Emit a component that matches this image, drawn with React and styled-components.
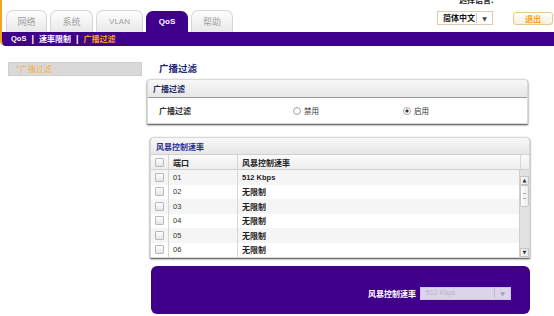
import React from 'react';
import styled, { createGlobalStyle } from 'styled-components';

const PURPLE = '#3f008b';
const ORANGE = '#f7a21b';
const CJK = `"Noto Sans CJK SC", "Liberation Sans", sans-serif`;
const LAT = `"Liberation Sans", "Noto Sans CJK SC", sans-serif`;

const Global = createGlobalStyle`
  html, body { margin: 0; padding: 0; background: #fff; overflow: hidden; }
  body { font-family: ${LAT}; }
  * { box-sizing: border-box; }
`;

const Page = styled.div`
  width: 554px;
  height: 316px;
  overflow: hidden;
`;

const TopFrame = styled.div`
  border-left: 2px solid ${ORANGE};
  border-bottom-left-radius: 5px;
  overflow: hidden;
`;

const Header = styled.header`
  height: 32px;
  display: flex;
  justify-content: space-between;
  align-items: flex-end;
  padding-left: 4px;
`;

const Tabs = styled.nav`
  display: flex;
  align-items: flex-end;
  gap: 3px;
`;

const Tab = styled.div`
  width: ${p => p.$w}px;
  height: ${p => (p.$active ? 21 : 22)}px;
  border: 1px solid ${p => (p.$active ? PURPLE : '#d6d6d6')};
  border-bottom: none;
  border-radius: 7px 7px 0 0;
  background: ${p => (p.$active ? PURPLE : 'linear-gradient(#fefefe, #e8e8e8)')};
  color: ${p => (p.$active ? '#fff' : '#a0a0a0')};
  font-family: ${p => (p.$latin ? LAT : CJK)};
  font-weight: ${p => (p.$active ? 700 : 400)};
  font-size: ${p => (p.$latin ? 8 : 9)}px;
  display: flex;
  align-items: center;
  justify-content: center;
  padding-bottom: 1px;
`;

const LangBlock = styled.div`
  align-self: stretch;
  display: flex;
  flex-direction: column;
  margin-top: -5px;
  margin-right: 1px;
`;

const LangLabel = styled.div`
  font-family: ${CJK};
  font-weight: 700;
  font-size: 8px;
  line-height: 9px;
  color: #222;
  padding-left: 22px;
`;

const LangRow = styled.div`
  display: flex;
  align-items: flex-start;
  margin-top: 7px;
  gap: 20px;
`;

const LangSelect = styled.div`
  width: 56px;
  height: 14px;
  border: 1px solid #d9ccb0;
  background: #fff;
  display: flex;
  align-items: center;
  font-family: ${CJK};
  font-weight: 700;
  font-size: 8px;
  color: #111;
`;

const SelectText = styled.span`
  flex: 1;
  padding-left: 5px;
  line-height: 12px;
`;

const SelectArrow = styled.span`
  width: 16px;
  height: 10px;
  border-left: 1px solid ${p => p.$line || '#ccc'};
  display: flex;
  align-items: center;
  justify-content: center;
  font-size: 6px;
  color: ${p => p.$color || '#444'};
  font-family: "DejaVu Sans", sans-serif;
`;

const LogoutBtn = styled.button`
  margin-top: 1px;
  width: 40px;
  height: 13px;
  border: 1px solid #e8c889;
  border-radius: 3px;
  background: linear-gradient(#ffffff, #f4efe4);
  color: ${ORANGE};
  font-family: ${CJK};
  font-weight: 700;
  font-size: 8px;
  line-height: 10px;
  padding: 0;
`;

const SubNav = styled.div`
  height: 14px;
  background: ${PURPLE};
  display: flex;
  align-items: center;
  padding-left: 9px;
  font-family: ${CJK};
  font-weight: 700;
  font-size: 8px;
  color: #fff;
`;

const NavItem = styled.span`
  color: ${p => (p.$current ? ORANGE : '#fff')};
  font-family: ${p => (p.$latin ? LAT : CJK)};
  font-size: ${p => (p.$latin ? 7.5 : 8)}px;
  line-height: 12px;
`;

const NavSep = styled.span`
  margin: 0 5px;
  font-family: ${LAT};
  font-size: 9px;
  line-height: 12px;
`;

const Body = styled.div`
  display: flex;
  align-items: flex-start;
  padding-top: 16px;
`;

const Sidebar = styled.aside`
  width: 134px;
  margin-left: 8px;
  margin-right: 5px;
`;

const SideItem = styled.div`
  height: 14px;
  background: #d9d9d9;
  border: 1px solid #cfcfcf;
  color: #f5b04a;
  font-family: ${CJK};
  font-size: 8px;
  line-height: 12px;
  padding-left: 7px;
`;

const Main = styled.main`
  width: 383px;
  display: flex;
  flex-direction: column;
`;

const Title = styled.h1`
  margin: 0;
  padding-left: 12px;
  font-family: ${CJK};
  font-weight: 700;
  font-size: 9.5px;
  line-height: 12px;
  color: #1d2a7a;
`;

const Panel = styled.section`
  width: ${p => p.$w}px;
  margin-left: ${p => p.$ml || 0}px;
  margin-top: ${p => p.$mt}px;
  border: 1px solid #d8d8d8;
  border-radius: 4px 4px 0 0;
  background: #fff;
  box-shadow: 0 1px 2px rgba(0, 0, 0, 0.75);
  overflow: hidden;
`;

const PanelHeader = styled.div`
  height: ${p => p.$h}px;
  background: linear-gradient(#f8f8f8, #e6e6e6);
  border-bottom: 1px solid ${p => p.$line || '#9a9a9a'};
  font-family: ${CJK};
  font-weight: 700;
  font-size: 8px;
  color: ${p => p.$color || '#1f2a66'};
  display: flex;
  align-items: center;
  padding-left: ${p => p.$pl || 5}px;
`;

const FieldRow = styled.div`
  height: 25px;
  display: flex;
  align-items: center;
  padding-left: 11px;
`;

const FieldLabel = styled.div`
  width: 134px;
  font-family: ${CJK};
  font-weight: 700;
  font-size: 8px;
  color: #333;
`;

const RadioOpt = styled.label`
  width: ${p => p.$w}px;
  display: flex;
  align-items: center;
  gap: 3px;
  font-family: ${CJK};
  font-size: 7.5px;
  color: #333;
`;

const RadioDot = styled.span`
  width: 8px;
  height: 8px;
  border-radius: 50%;
  border: 1px solid #a8a8a8;
  background: radial-gradient(circle, ${p => (p.$on ? '#333 0 1.3px, #fff 1.8px' : '#fff 0 40%, #e6e6e6 100%')});
`;

const TableWrap = styled.div`
  position: relative;
`;

const Grid = styled.div`
  display: grid;
  grid-template-columns: 18px 69px 283px 1fr;
`;

const Cell = styled.div`
  height: ${p => p.$h}px;
  display: flex;
  align-items: center;
  justify-content: ${p => (p.$center ? 'center' : 'flex-start')};
  padding-left: ${p => (p.$center ? 0 : 4)}px;
  border-right: ${p => (p.$line ? '1px solid #d6d6d6' : 'none')};
  background: ${p => (p.$head ? 'linear-gradient(#fbfbfb, #ededed)' : p.$alt ? '#f5f5f5' : '#fff')};
  border-bottom: ${p => (p.$head ? '1px solid #cfcfcf' : 'none')};
  font-family: ${p => (p.$latin ? LAT : CJK)};
  font-weight: ${p => (p.$bold ? 700 : 400)};
  font-size: ${p => (p.$latin ? 7.5 : 8)}px;
  color: ${p => (p.$bold ? '#222' : '#333')};
`;

const Check = styled.span`
  width: 9px;
  height: 9px;
  border: 1px solid #b9b9b9;
  border-radius: 1px;
  background: linear-gradient(#ffffff, #e4e4e4);
`;

const Scrollbar = styled.div`
  position: absolute;
  right: 0;
  top: 15px;
  bottom: 0;
  width: 10px;
  background: #e2e2e2;
  border-left: 1px solid #cfcfcf;
  display: flex;
  flex-direction: column;
`;

const ScrollBtn = styled.div`
  height: 9px;
  background: linear-gradient(90deg, #fafafa, #e8e8e8);
  border: 1px solid #c6c6c6;
  font-family: "DejaVu Sans", sans-serif;
  font-size: 5px;
  line-height: 7px;
  text-align: center;
  color: #333;
  margin-top: ${p => (p.$bottom ? 'auto' : '6px')};
`;

const Thumb = styled.div`
  height: 22px;
  background: linear-gradient(90deg, #fdfdfd, #ececec);
  border: 1px solid #c6c6c6;
  border-radius: 2px;
  display: flex;
  align-items: center;
  justify-content: center;
  &::after {
    content: '';
    width: 3px;
    height: 4px;
    border-top: 1px solid #aaa;
    border-bottom: 1px solid #aaa;
  }
`;

const ActionBar = styled.div`
  width: 379px;
  margin-left: 4px;
  margin-top: 8px;
  height: 48px;
  border-radius: 6px;
  background: ${PURPLE};
  display: flex;
  align-items: center;
  justify-content: flex-end;
  padding: 6px 19px 0 0;
  gap: 4px;
`;

const ActionLabel = styled.span`
  font-family: ${CJK};
  font-weight: 700;
  font-size: 8px;
  color: #fff;
`;

const DisabledSelect = styled.div`
  width: 91px;
  height: 13px;
  background: #dcd4ea;
  border: 1px solid #cfc5e4;
  display: flex;
  align-items: center;
  font-family: ${LAT};
  font-size: 7px;
  color: #b9b1c9;
`;

const ports = [
  ['01', '512 Kbps'],
  ['02', '无限制'],
  ['03', '无限制'],
  ['04', '无限制'],
  ['05', '无限制'],
  ['06', '无限制'],
];

export default function App() {
  return (
    <Page>
      <Global />
      <TopFrame>
        <Header>
          <Tabs>
            <Tab $w={41}>网络</Tab>
            <Tab $w={43}>系统</Tab>
            <Tab $w={47} $latin>VLAN</Tab>
            <Tab $w={42} $latin $active>QoS</Tab>
            <Tab $w={42}>帮助</Tab>
          </Tabs>
          <LangBlock>
            <LangLabel>选择语言:</LangLabel>
            <LangRow>
              <LangSelect>
                <SelectText>简体中文</SelectText>
                <SelectArrow>▼</SelectArrow>
              </LangSelect>
              <LogoutBtn>退出</LogoutBtn>
            </LangRow>
          </LangBlock>
        </Header>
        <SubNav>
          <NavItem $latin>QoS</NavItem>
          <NavSep>|</NavSep>
          <NavItem>速率限制</NavItem>
          <NavSep>|</NavSep>
          <NavItem $current>广播过滤</NavItem>
        </SubNav>
      </TopFrame>
      <Body>
        <Sidebar>
          <SideItem>*广播过滤</SideItem>
        </Sidebar>
        <Main>
          <Title>广播过滤</Title>
          <Panel $w={381} $mt={5}>
            <PanelHeader $h={18}>广播过滤</PanelHeader>
            <FieldRow>
              <FieldLabel>广播过滤</FieldLabel>
              <RadioOpt $w={110}>
                <RadioDot />
                禁用
              </RadioOpt>
              <RadioOpt $w={60}>
                <RadioDot $on />
                启用
              </RadioOpt>
            </FieldRow>
          </Panel>
          <Panel $w={380} $ml={3} $mt={13}>
            <PanelHeader $h={17} $color="#2b2f9a" $line="#d0d0d0">风暴控制速率</PanelHeader>
            <TableWrap>
              <Grid>
                <Cell $h={15} $head $center $line><Check /></Cell>
                <Cell $h={15} $head $bold $line>端口</Cell>
                <Cell $h={15} $head $bold $line>风暴控制速率</Cell>
                <Cell $h={15} $head />
                {ports.map(([port, rate], i) => (
                  <React.Fragment key={port}>
                    <Cell $h={14.5} $alt={i % 2 === 0} $center $line><Check /></Cell>
                    <Cell $h={14.5} $alt={i % 2 === 0} $latin $line>{port}</Cell>
                    <Cell $h={14.5} $alt={i % 2 === 0} $bold $latin={rate.startsWith('5')}>{rate}</Cell>
                    <Cell $h={14.5} $alt={i % 2 === 0} />
                  </React.Fragment>
                ))}
              </Grid>
              <Scrollbar>
                <ScrollBtn>▲</ScrollBtn>
                <Thumb />
                <ScrollBtn $bottom>▼</ScrollBtn>
              </Scrollbar>
            </TableWrap>
          </Panel>
          <ActionBar>
            <ActionLabel>风暴控制速率</ActionLabel>
            <DisabledSelect>
              <SelectText>512 Kbps</SelectText>
              <SelectArrow $line="#c0b8d0" $color="#a9a1ba">▼</SelectArrow>
            </DisabledSelect>
          </ActionBar>
        </Main>
      </Body>
    </Page>
  );
}
